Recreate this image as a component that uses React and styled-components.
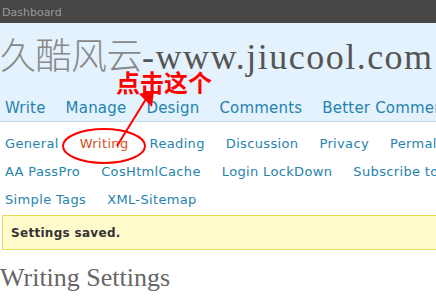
import styled, { createGlobalStyle } from 'styled-components';

const GlobalStyle = createGlobalStyle`
  html, body {
    margin: 0;
    padding: 0;
    background: #fff;
  }
  body {
    font-family: "DejaVu Sans", Verdana, sans-serif;
  }
`;

const navItems = ['Write', 'Manage', 'Design', 'Comments', 'Better Comments'];

const subRows = [
  ['General', 'Writing', 'Reading', 'Discussion', 'Privacy', 'Permalinks'],
  ['AA PassPro', 'CosHtmlCache', 'Login LockDown', 'Subscribe to Comments'],
  ['Simple Tags', 'XML-Sitemap'],
];

export default function App() {
  return (
    <>
      <GlobalStyle />
      <Page>
        <TopBar>Dashboard</TopBar>
        <Header>
          <SiteTitle>
            <CjkPart>久酷风云</CjkPart>-www.jiucool.com
          </SiteTitle>
          <Nav>
            {navItems.map((n) => (
              <NavLink key={n}>{n}</NavLink>
            ))}
          </Nav>
        </Header>
        <SubMenu>
          {subRows.map((row, i) => (
            <SubRow key={i}>
              {row.map((s) => (
                <SubLink key={s} $current={s === 'Writing'}>
                  {s}
                </SubLink>
              ))}
            </SubRow>
          ))}
        </SubMenu>
        <Notice>Settings saved.</Notice>
        <PageTitle>Writing Settings</PageTitle>

        <ClickHint>点击这个</ClickHint>
        <Marks width="436" height="298" viewBox="0 0 436 298">
          <ellipse cx="104" cy="146" rx="41" ry="17" fill="none" stroke="#f00" strokeWidth="2" />
          <line x1="117" y1="146" x2="146" y2="99" stroke="#f00" strokeWidth="2" />
          <polygon points="139,94 154,90 152,107" fill="#f00" />
        </Marks>
      </Page>
    </>
  );
}

const Page = styled.div`
  position: relative;
  width: 436px;
  height: 298px;
  overflow: hidden;
`;

const TopBar = styled.div`
  height: 23px;
  background: #464646;
  color: #999;
  font-size: 11px;
  line-height: 26px;
  padding-left: 2px;
`;

const Header = styled.div`
  background: #e4f2fd;
  border-bottom: 1px solid #c6d9e9;
  height: 98px;
  white-space: nowrap;
`;

const SiteTitle = styled.h1`
  margin: 0;
  padding-top: 10px;
  font: normal 36px/40px "Liberation Serif", "Noto Sans CJK SC", serif;
  color: #555;
  letter-spacing: 1.5px;
`;

const CjkPart = styled.span`
  color: #888;
  font-family: "Noto Sans CJK SC", sans-serif;
  font-weight: 300;
  letter-spacing: -0.5px;
`;

const Nav = styled.div`
  display: flex;
  gap: 20px;
  padding: 21px 0 0 5px;
`;

const NavLink = styled.span`
  font-size: 15px;
  line-height: 20px;
  letter-spacing: 0.2px;
  color: #2583ad;
`;

const SubMenu = styled.div`
  padding: 7px 0 0 5px;
  white-space: nowrap;
`;

const SubRow = styled.div`
  display: flex;
  gap: 21px;
  height: 28px;
  align-items: center;
`;

const SubLink = styled.span`
  font-size: 13px;
  letter-spacing: 0.35px;
  color: ${(p) => (p.$current ? '#d54e21' : '#2583ad')};
`;

const Notice = styled.div`
  margin: 2px 0 0 2px;
  background: #fffbcc;
  border: 1px solid #e6db55;
  border-right: none;
  height: 33px;
  padding-left: 8px;
  font-size: 12px;
  font-weight: bold;
  line-height: 35px;
  color: #333;
  letter-spacing: 0.3px;
`;

const PageTitle = styled.h2`
  margin: 13px 0 0 0;
  font: normal 26px/30px "Liberation Serif", serif;
  color: #666;
`;

const ClickHint = styled.div`
  position: absolute;
  left: 116px;
  top: 69px;
  font: bold 24px/25px "Noto Sans CJK SC", sans-serif;
  color: #f00;
`;

const Marks = styled.svg`
  position: absolute;
  left: 0;
  top: 0;
  pointer-events: none;
`;
